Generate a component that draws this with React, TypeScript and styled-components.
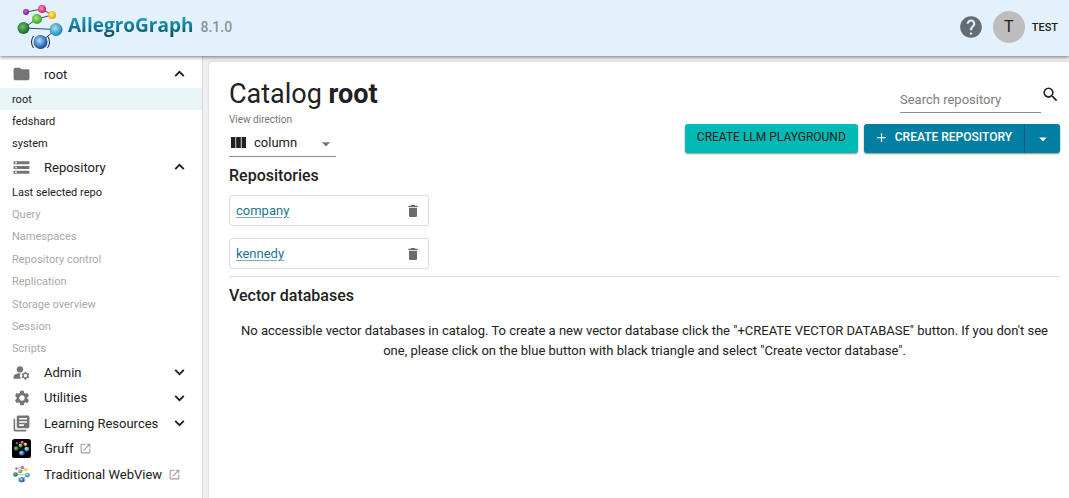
import React, { useId, useState } from "react";
import styled, { createGlobalStyle } from "styled-components";
import {
  MdAdd,
  MdArrowDropDown,
  MdDelete,
  MdFolder,
  MdHelp,
  MdLibraryBooks,
  MdManageAccounts,
  MdOpenInNew,
  MdSearch,
  MdSettings,
  MdStorage,
} from "react-icons/md";

const GlobalStyle = createGlobalStyle`
  *, *::before, *::after { box-sizing: border-box; }
  body {
    margin: 0;
    background: #fff;
    color: #212121;
    font-family: Roboto, "Liberation Sans", sans-serif;
    font-size: 13px;
  }
  button, input, select { font: inherit; color: inherit; }
  button { cursor: pointer; }
`;

const Page = styled.div`
  display: flex;
  flex-direction: column;
  min-height: 100vh;
`;

const Header = styled.header`
  position: relative;
  display: flex;
  align-items: center;
  justify-content: space-between;
  height: 56px;
  padding: 0 11px 0 17px;
  background: #e3f1fc;
  box-shadow: 0 1px 4px rgba(0, 0, 0, 0.55);
`;

const Brand = styled.a`
  display: flex;
  align-items: center;
  color: inherit;
  text-decoration: none;
`;

const BrandName = styled.span`
  margin-left: 5px;
  padding-bottom: 6px;
  font: 700 19px/26px "Open Sans", "Noto Sans", sans-serif;
  background: linear-gradient(#1a9fc0 20%, #0a3f4e 85%);
  background-clip: text;
  -webkit-background-clip: text;
  color: transparent;
`;

const Version = styled.span`
  margin-left: 7px;
  padding-bottom: 2px;
  font-size: 14px;
  font-weight: 500;
  color: #8b949b;
`;

const Account = styled.div`
  display: flex;
  align-items: center;
  padding-bottom: 2px;
`;

const IconButton = styled.button<{ $tone?: string }>`
  display: inline-flex;
  align-items: center;
  justify-content: center;
  padding: 0;
  border: 0;
  background: none;
  color: ${(p) => p.$tone ?? "#212121"};
`;

const UserButton = styled.button`
  display: flex;
  align-items: center;
  gap: 7px;
  margin-left: 9px;
  padding: 0;
  border: 0;
  background: none;
  font-size: 11px;
  font-weight: 500;
`;

const Avatar = styled.span`
  width: 32px;
  height: 32px;
  border-radius: 50%;
  background: #bdbdbd;
  font-size: 16px;
  font-weight: 400;
  line-height: 32px;
  text-align: center;
`;

const Body = styled.div`
  display: flex;
  flex: 1;
`;

const Sidebar = styled.nav`
  flex: none;
  width: 203px;
  padding-top: 6px;
  border-right: 1px solid #d9d9d9;
`;

const NavHeading = styled.button`
  display: flex;
  align-items: center;
  width: 100%;
  min-height: 25px;
  padding: 0 17px 1px 12px;
  border: 0;
  background: none;
  text-align: left;

  &[aria-expanded="true"] { min-height: 26px; padding-bottom: 2px; }
`;

const NavIcon = styled.span`
  display: flex;
  justify-content: center;
  width: 19px;
  margin-right: 13px;
  color: #757575;
`;

const NavLabel = styled.span`
  flex: 1;
`;

const NavList = styled.ul<{ $height: number }>`
  display: grid;
  grid-auto-rows: 1fr;
  min-height: ${(p) => p.$height}px;
  margin: 0;
  padding: 0;
  list-style: none;
`;

const NavItem = styled.a<{ $selected?: boolean; $disabled?: boolean }>`
  display: flex;
  align-items: center;
  height: 100%;
  padding-left: 12px;
  background: ${(p) => (p.$selected ? "#e8f4f6" : "none")};
  color: ${(p) => (p.$disabled ? "#a9a9a9" : "#212121")};
  font-size: 11px;
  text-decoration: none;
`;

const NavLink = styled.a`
  display: flex;
  align-items: center;
  width: 100%;
  height: 100%;
  padding: 0 12px 2px;
  color: inherit;
  text-decoration: none;

  > svg { margin-left: 6px; color: #9e9e9e; }
`;

const Backdrop = styled.main`
  flex: 1;
  min-width: 0;
  display: flex;
  padding: 6px 0 0 6px;
  background: #f0f0f1;
`;

const Paper = styled.div`
  flex: 1;
  min-width: 0;
  padding: 14px 9px 20px 20px;
  border-radius: 4px 0 0 0;
  background: #fff;
  box-shadow: 0 0 2px rgba(0, 0, 0, 0.2);
`;

const Top = styled.div`
  display: flex;
  justify-content: space-between;
`;

const Title = styled.h1`
  margin: 0;
  font-size: 27px;
  font-weight: 400;
  line-height: 36px;
`;

const FieldLabel = styled.label`
  display: block;
  color: #757575;
  font-size: 10px;
  line-height: 16px;
`;

const SelectBox = styled.div`
  display: flex;
  align-items: center;
  width: 107px;
  height: 29px;
  border-bottom: 1px solid #8c8c8c;
  padding-left: 2px;

  > svg:last-child { margin-left: -20px; margin-top: 3px; color: #757575; pointer-events: none; }
`;

const Select = styled.select`
  flex: 1;
  min-width: 0;
  margin-left: 8px;
  padding: 0;
  border: 0;
  outline: 0;
  background: none;
  appearance: none;
`;

const Actions = styled.div`
  display: flex;
  flex-direction: column;
  align-items: flex-end;
  padding-top: 8px;
`;

const Search = styled.form`
  display: flex;
  align-items: flex-start;

  > button { padding-top: 1px; }
`;

const SearchInput = styled.input`
  width: 141px;
  height: 29px;
  padding: 2px 0 0;
  border: 0;
  border-bottom: 1px solid #8c8c8c;
  outline: 0;
  background: none;

  &::placeholder { color: #7d7d7d; opacity: 1; }
`;

const ButtonRow = styled.div`
  display: flex;
  gap: 6px;
  margin-top: 11px;
`;

const raised = "0 1px 2px rgba(0, 0, 0, 0.45)";

const PlaygroundButton = styled.button`
  height: 29px;
  padding: 0 12px 3px;
  border: 0;
  border-radius: 3px;
  background: #00bab5;
  box-shadow: ${raised};
  font-size: 12px;
  font-weight: 400;
`;

const SplitButton = styled.div`
  display: flex;
  border-radius: 3px;
  background: #007fa3;
  box-shadow: ${raised};
`;

const SplitPart = styled.button<{ $menu?: boolean }>`
  display: flex;
  align-items: center;
  justify-content: center;
  gap: 6px;
  height: 29px;
  width: ${(p) => (p.$menu ? "36px" : "auto")};
  padding: ${(p) => (p.$menu ? "0" : "0 12px 3px 10px")};
  border: 0;
  border-left: ${(p) => (p.$menu ? "1px solid #006280" : "0")};
  background: none;
  color: #fff;
  font-size: 12px;
  font-weight: 500;
`;

const SectionTitle = styled.h2`
  margin: 8px 0;
  font-size: 16px;
  font-weight: 500;
  line-height: 22px;
`;

const RepoList = styled.ul`
  display: grid;
  gap: 12px;
  margin: 0;
  padding: 0 0 7px;
  border-bottom: 1px solid #dcdcdc;
  list-style: none;
`;

const Repo = styled.li`
  display: flex;
  align-items: center;
  justify-content: space-between;
  width: 200px;
  height: 31px;
  padding: 0 7px 0 6px;
  border: 1px solid #dcdcdc;
  border-radius: 3px;
`;

const RepoLink = styled.a`
  color: #1c7590;
  text-decoration: underline;
  text-decoration-color: #7fb0c0;
  text-underline-offset: 2px;
`;

const Empty = styled.p`
  margin: 14px 0 0;
  padding: 0 8px;
  line-height: 20px;
  text-align: center;
`;

const NODES = [
  { x: 9, y: 7, r: 3, light: "#c05fe0", color: "#7a1a9c" },
  { x: 25, y: 4, r: 4, light: "#ff9ac0", color: "#d4195e" },
  { x: 35, y: 10, r: 4, light: "#fff27a", color: "#f0a000" },
  { x: 20, y: 14, r: 5, light: "#a8ec78", color: "#2f9e22" },
  { x: 6.5, y: 23, r: 6, light: "#6cc06a", color: "#14682a" },
  { x: 39, y: 24.5, r: 6.5, light: "#a5e2fa", color: "#1b82b8" },
  { x: 23.5, y: 37, r: 7, light: "#a5e4ff", color: "#10459c" },
];

function NodesLogo({ size, tile, line = "#3c4a52" }: { size: number; tile?: boolean; line?: string }) {
  const id = useId();
  return (
    <svg width={size} height={size} viewBox={tile ? "-6 -6 58 58" : "0 0 46 46"} aria-hidden="true">
      <defs>
        {NODES.map((n, i) => (
          <radialGradient key={i} id={`${id}-${i}`} cx="0.42" cy="0.4" r="0.6">
            <stop offset="0" stopColor={n.light} />
            <stop offset="1" stopColor={n.color} />
          </radialGradient>
        ))}
      </defs>
      {tile && <rect x="-6" y="-6" width="58" height="58" rx="8" fill="#000" />}
      <path d="M9 7L25 4L35 10L20 14L6.5 23L39 24.5L23.5 37" fill="none" stroke={line} />
      <path d="M16.5 31Q12.5 37 16.5 43M30.5 31Q34.5 37 30.5 43" fill="none" stroke={tile ? "#777" : "#222"} />
      {NODES.map((n, i) => (
        <circle key={i} cx={n.x} cy={n.y} r={tile ? n.r + 1 : n.r} fill={`url(#${id}-${i})`} />
      ))}
    </svg>
  );
}

function ColumnsIcon() {
  return (
    <svg width="15" height="11" viewBox="0 0 15 11" fill="#212121" aria-hidden="true">
      <rect width="4.4" height="11" />
      <rect x="5.2" width="4.6" height="11" />
      <rect x="10.6" width="4.4" height="11" />
    </svg>
  );
}

function Chevron({ up }: { up: boolean }) {
  return (
    <svg width="11" height="8" viewBox="0 0 11 8" fill="none" stroke="#212121" strokeWidth="1.9" aria-hidden="true">
      <path d={up ? "M1.2 6.2L5.5 1.9L9.8 6.2" : "M1.2 1.9L5.5 6.2L9.8 1.9"} />
    </svg>
  );
}

interface SectionProps {
  icon: React.ReactNode;
  label: string;
  open?: boolean;
  height?: number;
  children?: React.ReactNode;
}

function Section({ icon, label, open = false, height = 0, children }: SectionProps) {
  const [expanded, setExpanded] = useState(open);
  return (
    <>
      <NavHeading type="button" aria-expanded={expanded} onClick={() => setExpanded(!expanded)}>
        <NavIcon>{icon}</NavIcon>
        <NavLabel>{label}</NavLabel>
        <Chevron up={expanded} />
      </NavHeading>
      {expanded && children && <NavList $height={height}>{children}</NavList>}
    </>
  );
}

const CATALOGS = ["root", "fedshard", "system"];
const REPO_PAGES = [
  "Last selected repo",
  "Query",
  "Namespaces",
  "Repository control",
  "Replication",
  "Storage overview",
  "Session",
  "Scripts",
];

export default function App() {
  return (
    <Page>
      <GlobalStyle />
      <Header>
        <Brand href="#">
          <NodesLogo size={46} />
          <BrandName>AllegroGraph</BrandName>
          <Version>8.1.0</Version>
        </Brand>
        <Account>
          <IconButton type="button" aria-label="Help" $tone="#666d72">
            <MdHelp size={26} />
          </IconButton>
          <UserButton type="button">
            <Avatar>T</Avatar>
            TEST
          </UserButton>
        </Account>
      </Header>
      <Body>
        <Sidebar>
          <Section icon={<MdFolder size={20} />} label="root" open height={67}>
            {CATALOGS.map((name, i) => (
              <li key={name}>
                <NavItem href="#" $selected={i === 0}>{name}</NavItem>
              </li>
            ))}
          </Section>
          <Section icon={<MdStorage size={19} />} label="Repository" open height={179}>
            {REPO_PAGES.map((name, i) => (
              <li key={name}>
                <NavItem href="#" $disabled={i > 0} aria-disabled={i > 0}>{name}</NavItem>
              </li>
            ))}
          </Section>
          <NavList as="div" $height={128}>
            <Section icon={<MdManageAccounts size={19} />} label="Admin" />
            <Section icon={<MdSettings size={18} />} label="Utilities" />
            <Section icon={<MdLibraryBooks size={19} />} label="Learning Resources" />
            <NavLink href="#">
              <NavIcon><NodesLogo size={19} tile line="#666" /></NavIcon>
              Gruff
              <MdOpenInNew size={13} />
            </NavLink>
            <NavLink href="#">
              <NavIcon><NodesLogo size={17} /></NavIcon>
              Traditional WebView
              <MdOpenInNew size={13} />
            </NavLink>
          </NavList>
        </Sidebar>
        <Backdrop>
          <Paper>
            <Top>
              <div>
                <Title>Catalog <b>root</b></Title>
                <FieldLabel htmlFor="direction">View direction</FieldLabel>
                <SelectBox>
                  <ColumnsIcon />
                  <Select id="direction" defaultValue="column">
                    <option value="column">column</option>
                    <option value="row">row</option>
                  </Select>
                  <MdArrowDropDown size={20} />
                </SelectBox>
              </div>
              <Actions>
                <Search role="search" onSubmit={(e) => e.preventDefault()}>
                  <SearchInput aria-label="Search repository" placeholder="Search repository" />
                  <IconButton type="submit" aria-label="Search">
                    <MdSearch size={19} />
                  </IconButton>
                </Search>
                <ButtonRow>
                  <PlaygroundButton type="button">CREATE LLM PLAYGROUND</PlaygroundButton>
                  <SplitButton>
                    <SplitPart type="button">
                      <MdAdd size={15} />
                      CREATE REPOSITORY
                    </SplitPart>
                    <SplitPart type="button" $menu aria-label="More create options">
                      <MdArrowDropDown size={18} />
                    </SplitPart>
                  </SplitButton>
                </ButtonRow>
              </Actions>
            </Top>
            <SectionTitle>Repositories</SectionTitle>
            <RepoList>
              {["company", "kennedy"].map((name) => (
                <Repo key={name}>
                  <RepoLink href="#">{name}</RepoLink>
                  <IconButton type="button" aria-label={`Delete ${name}`} $tone="#6b6b6b">
                    <MdDelete size={16} />
                  </IconButton>
                </Repo>
              ))}
            </RepoList>
            <SectionTitle>Vector databases</SectionTitle>
            <Empty>
              No accessible vector databases in catalog. To create a new vector database click the "+CREATE VECTOR
              DATABASE" button. If you don't see one, please click on the blue button with black triangle and select
              "Create vector database".
            </Empty>
          </Paper>
        </Backdrop>
      </Body>
    </Page>
  );
}
